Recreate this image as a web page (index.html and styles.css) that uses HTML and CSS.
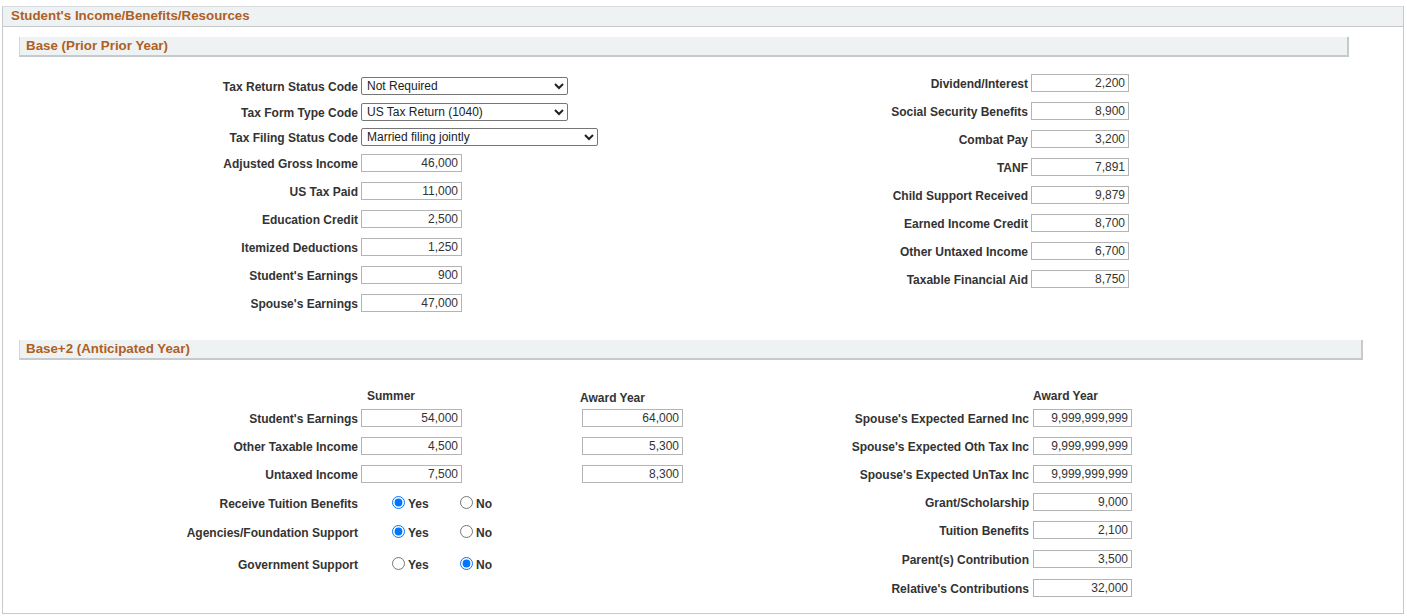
FILE: index.html
```html
<!DOCTYPE html>
<html lang="en">
<head>
  <meta charset="UTF-8">
  <title>Student's Income/Benefits/Resources</title>
  <link rel="stylesheet" href="styles.css">
</head>
<body>

  <div class="box">
    <div class="box-head">Student's Income/Benefits/Resources</div>
    <div class="box-body">

      <div class="sub-head sub-head-base">Base (Prior Prior Year)</div>
      <div class="base">
        <div class="grid base-left">
          <label class="lbl">Tax Return Status Code</label>
          <select class="sel sel-short"><option>Not Required</option></select>
          <label class="lbl">Tax Form Type Code</label>
          <select class="sel sel-short"><option>US Tax Return (1040)</option></select>
          <label class="lbl">Tax Filing Status Code</label>
          <select class="sel sel-long"><option>Married filing jointly</option></select>
          <label class="lbl">Adjusted Gross Income</label>
          <input class="num" value="46,000">
          <label class="lbl">US Tax Paid</label>
          <input class="num" value="11,000">
          <label class="lbl">Education Credit</label>
          <input class="num" value="2,500">
          <label class="lbl">Itemized Deductions</label>
          <input class="num" value="1,250">
          <label class="lbl">Student's Earnings</label>
          <input class="num" value="900">
          <label class="lbl">Spouse's Earnings</label>
          <input class="num" value="47,000">
        </div>

        <div class="grid base-right">
          <label class="lbl">Dividend/Interest</label>
          <input class="num num-sm" value="2,200">
          <label class="lbl">Social Security Benefits</label>
          <input class="num num-sm" value="8,900">
          <label class="lbl">Combat Pay</label>
          <input class="num num-sm" value="3,200">
          <label class="lbl">TANF</label>
          <input class="num num-sm" value="7,891">
          <label class="lbl">Child Support Received</label>
          <input class="num num-sm" value="9,879">
          <label class="lbl">Earned Income Credit</label>
          <input class="num num-sm" value="8,700">
          <label class="lbl">Other Untaxed Income</label>
          <input class="num num-sm" value="6,700">
          <label class="lbl">Taxable Financial Aid</label>
          <input class="num num-sm" value="8,750">
        </div>
      </div>

      <div class="sub-head sub-head-antic">Base+2 (Anticipated Year)</div>
      <div class="antic">
        <div class="grid antic-left">
          <span></span>
          <span class="col-head">Summer</span>
          <span></span>
          <span class="col-head col-head-mid">Award Year</span>

          <label class="lbl">Student's Earnings</label>
          <input class="num" value="54,000">
          <span></span>
          <input class="num" value="64,000">

          <label class="lbl">Other Taxable Income</label>
          <input class="num" value="4,500">
          <span></span>
          <input class="num" value="5,300">

          <label class="lbl">Untaxed Income</label>
          <input class="num" value="7,500">
          <span></span>
          <input class="num" value="8,300">

          <label class="lbl">Receive Tuition Benefits</label>
          <div class="radios">
            <label class="opt"><input type="radio" name="tuition" checked> Yes</label>
            <label class="opt"><input type="radio" name="tuition"> No</label>
          </div>

          <label class="lbl">Agencies/Foundation Support</label>
          <div class="radios">
            <label class="opt"><input type="radio" name="agency" checked> Yes</label>
            <label class="opt"><input type="radio" name="agency"> No</label>
          </div>

          <label class="lbl">Government Support</label>
          <div class="radios">
            <label class="opt"><input type="radio" name="gov"> Yes</label>
            <label class="opt"><input type="radio" name="gov" checked> No</label>
          </div>
        </div>

        <div class="grid antic-right">
          <span></span>
          <span class="col-head">Award Year</span>
          <label class="lbl">Spouse's Expected Earned Inc</label>
          <input class="num" value="9,999,999,999">
          <label class="lbl">Spouse's Expected Oth Tax Inc</label>
          <input class="num" value="9,999,999,999">
          <label class="lbl">Spouse's Expected UnTax Inc</label>
          <input class="num" value="9,999,999,999">
          <label class="lbl">Grant/Scholarship</label>
          <input class="num" value="9,000">
          <label class="lbl">Tuition Benefits</label>
          <input class="num" value="2,100">
          <label class="lbl">Parent(s) Contribution</label>
          <input class="num" value="3,500">
          <label class="lbl">Relative's Contributions</label>
          <input class="num" value="32,000">
        </div>
      </div>

    </div>
  </div>

</body>
</html>
```

FILE: styles.css
```css
:root{
  --head-bg:#eff2f3;--line:#c6cacc;--title:#af5f23;
  --txt:#333;--field-line:#b4b4b4
}
*{box-sizing:border-box}
body{
  margin:6px 3px 0 2px;background:#fff;color:var(--txt);
  font-family:"Liberation Sans",Arial,sans-serif;font-size:12px
}

/* outer group box */
.box{border:1px solid var(--line);border-top-color:#d8dcde}
.box-head{
  height:20px;line-height:18px;padding-left:8px;
  background:var(--head-bg);border-bottom:1px solid var(--line);
  color:var(--title);font-weight:700;font-size:13.33px
}
.box-body{padding:0 0 11px 16px}

.sub-head{
  height:20px;line-height:17px;padding-left:6px;
  background:var(--head-bg);
  border-left:1px solid #d3d7d9;border-right:2px solid var(--line);border-bottom:2px solid var(--line);
  color:var(--title);font-weight:700;font-size:13.33px
}
.sub-head-base{margin-top:10px;width:1330px}
.sub-head-antic{margin-top:23px;width:1344px}

/* grids */
.grid{display:grid;align-items:center}
.lbl{text-align:right;padding-right:3px;padding-top:2px;font-weight:700;white-space:nowrap}

.base{display:flex;align-items:flex-start;padding-top:12px}
.base-left{
  width:579px;margin-top:4px;
  grid-template-columns:342px auto;
  grid-template-rows:26px 25px 25px repeat(6,28px)
}
.base-right{grid-template-columns:433px 98px;grid-template-rows:repeat(8,28px)}

.antic{display:flex;align-items:flex-start;padding-top:22px}
.antic-left{
  width:664px;
  grid-template-columns:342px 101px 120px 101px;
  grid-template-rows:22px 28px 28px 28px 30px 28px 36px
}
.antic-right{
  grid-template-columns:350px 99px;
  grid-template-rows:22px repeat(5,28px) 30px 28px
}
.antic-right .lbl{padding-right:4px}

.col-head{font-weight:700;align-self:end;padding-bottom:1px}
.antic-left .col-head{padding-left:6px}
.antic-left .col-head-mid{padding:0;margin-left:-2px;margin-bottom:-1px}

/* fields */
.num{
  width:101px;height:18px;padding:0 3px;margin:0;
  border:1px solid var(--field-line);border-radius:0;
  font:12px "Liberation Sans",Arial,sans-serif;color:var(--txt);text-align:right
}
.num-sm{width:98px}
.antic-right .num{width:99px}
.sel{
  height:18px;margin:0;padding:0 1px;
  border:1px solid #767676;border-radius:2px;background:#fff;
  font:12px "Liberation Sans",Arial,sans-serif;color:#222
}
.sel-short{width:207px}
.sel-long{width:237px}

.radios{grid-column:2 / 5;display:flex;padding-left:31px;padding-top:2px}
.opt{display:flex;align-items:center;width:68px;font-weight:700}
.opt input{margin:0 3px 0 0;width:13px;height:13px;position:relative;top:-2px}
```
